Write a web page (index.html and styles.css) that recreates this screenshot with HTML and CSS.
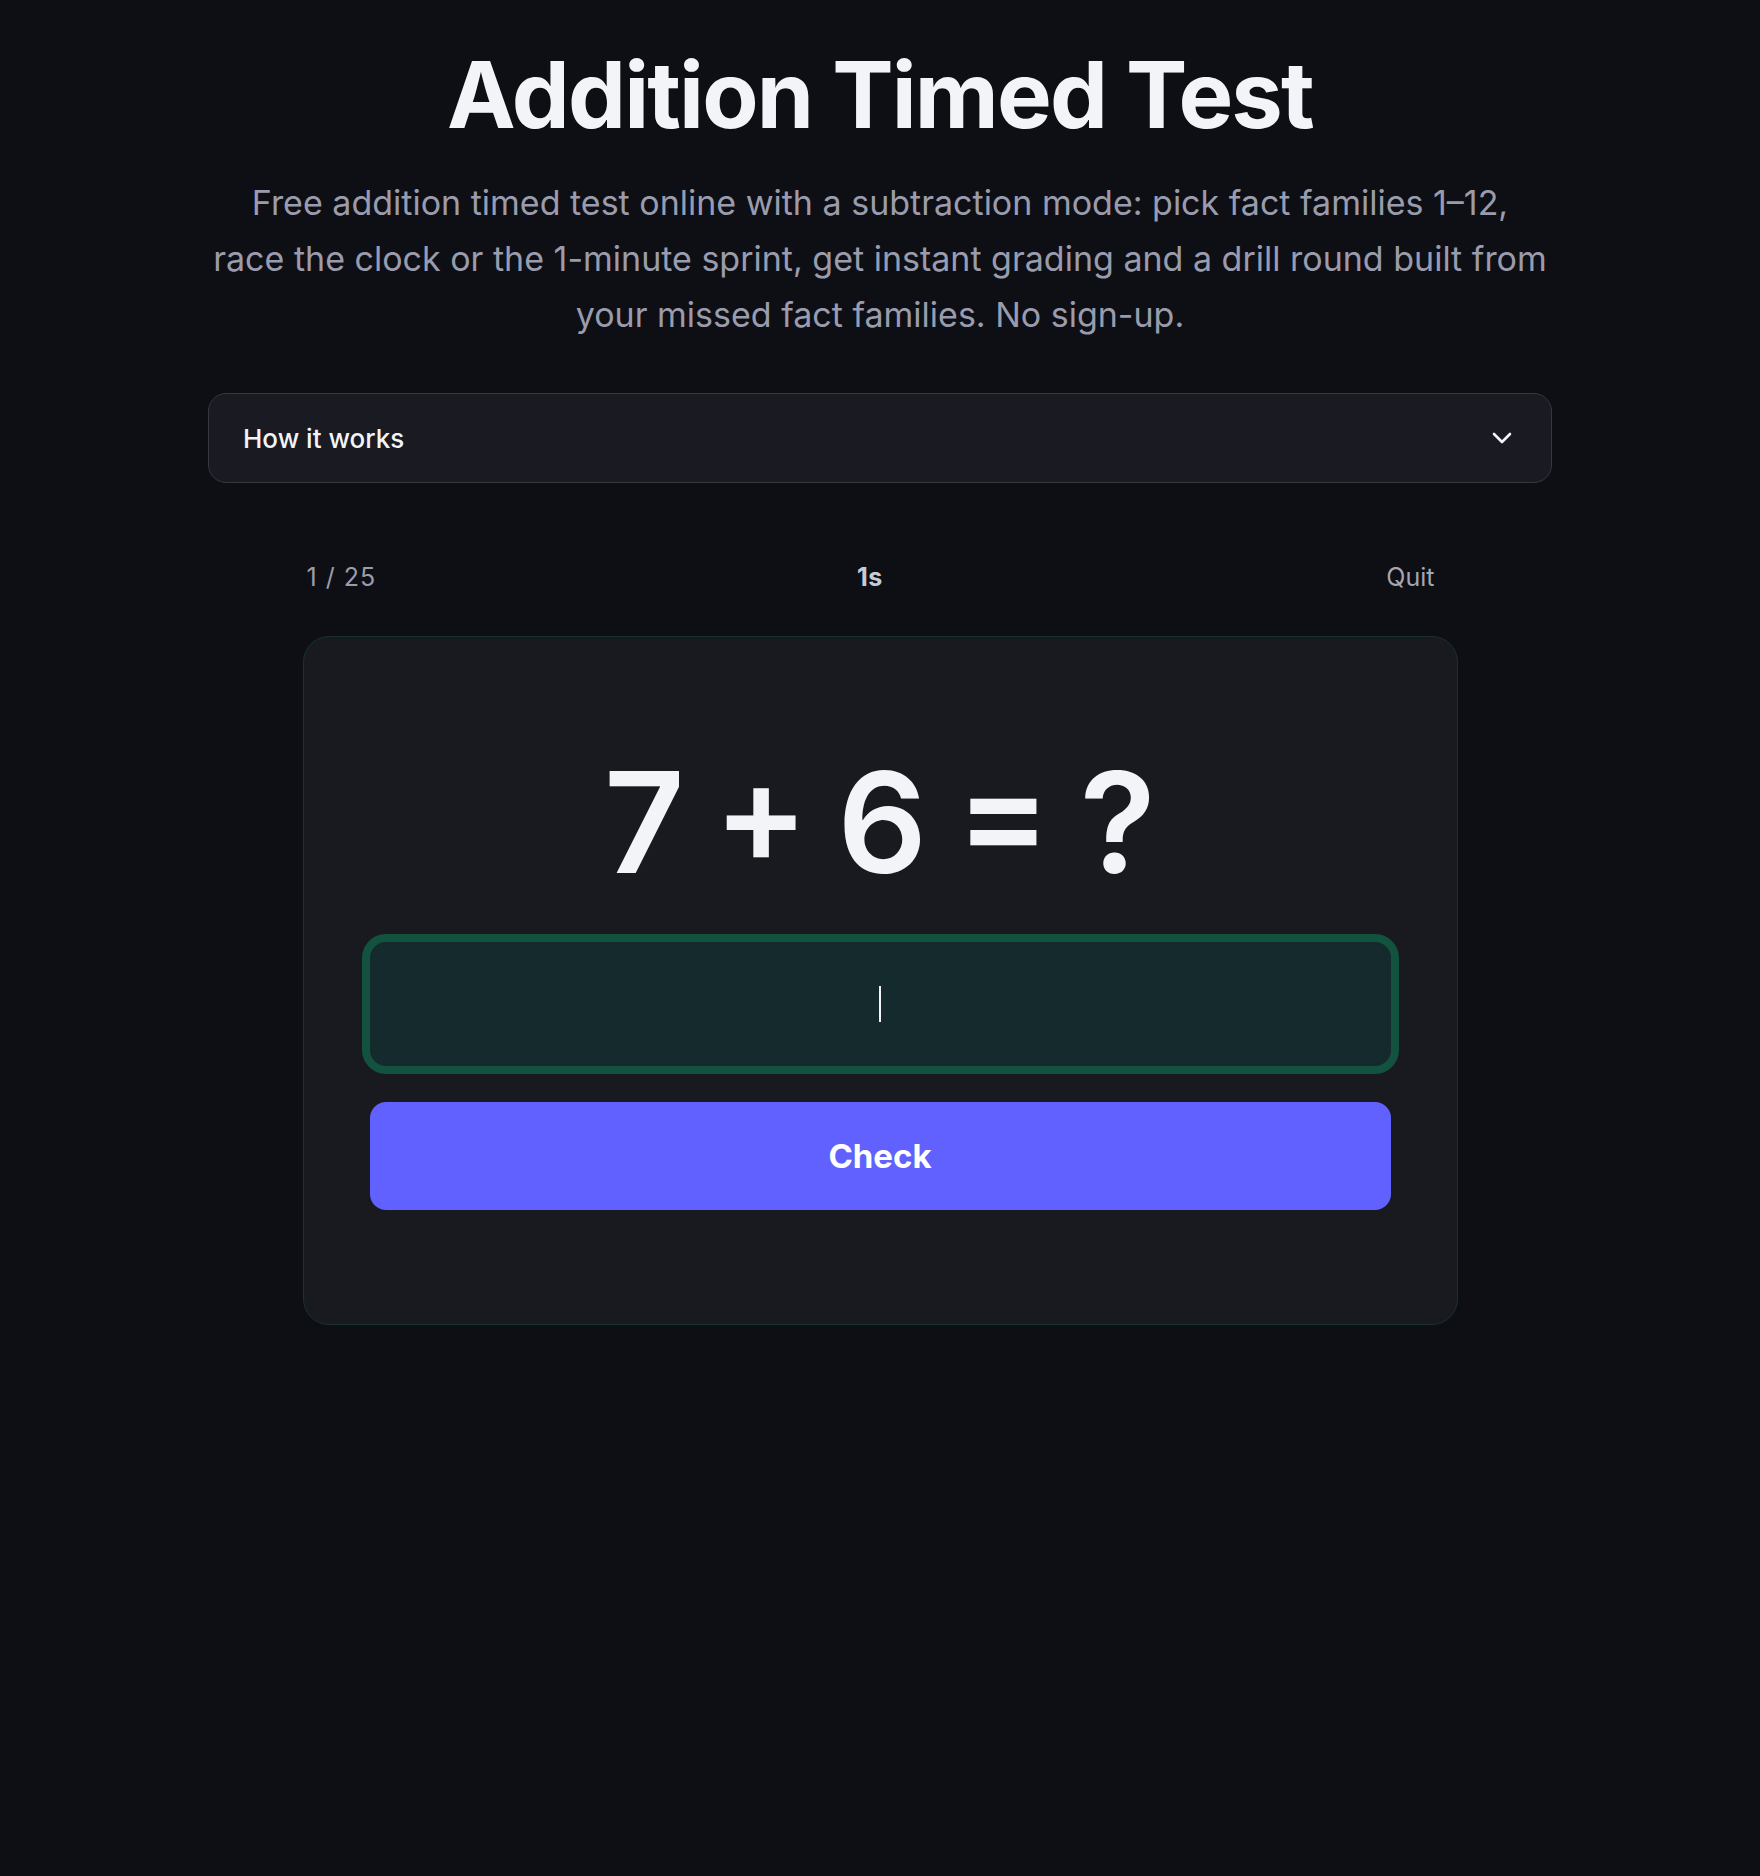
FILE: index.html
```html
<!DOCTYPE html>
<html lang="en">
<head>
<meta charset="utf-8">
<title>Addition Timed Test</title>
<link rel="stylesheet" href="styles.css">
</head>
<body>
<main class="page">
  <header class="hero">
    <h1 class="title">Addition Timed Test</h1>
    <p class="lead">Free addition timed test online with a subtraction mode: pick fact families 1–12, race the clock or the 1-minute sprint, get instant grading and a drill round built from your missed fact families. No sign-up.</p>
  </header>

  <details class="how">
    <summary class="how-summary">
      <span>How it works</span>
      <svg class="chev" width="20" height="12" viewBox="0 0 20 12" aria-hidden="true"><path d="M2 2l8 8 8-8" fill="none" stroke="#f3f4f8" stroke-width="2.6" stroke-linecap="round" stroke-linejoin="round"/></svg>
    </summary>
  </details>

  <section class="quiz">
    <div class="meta">
      <span class="count">1 / 25</span>
      <span class="timer">1s</span>
      <button class="quit" type="button">Quit</button>
    </div>
    <div class="card">
      <div class="problem">7 + 6 = ?</div>
      <div class="answer"><span class="caret"></span></div>
      <button class="check" type="button">Check</button>
    </div>
  </section>
</main>
</body>
</html>
```

FILE: styles.css
```css
* { box-sizing: border-box; }
html, body { margin: 0; padding: 0; }
body {
  background: #0e0f14;
  color: #f3f4f8;
  font-family: Inter, "Liberation Sans", sans-serif;
  min-height: 1876px;
}
.page {
  width: 1344px;
  margin: 0 auto;
  padding-top: 40px;
}
.hero { text-align: center; }
.title {
  margin: 0;
  font-size: 92px;
  line-height: 110px;
  font-weight: 700;
  letter-spacing: -0.02em;
  color: #f3f4f8;
}
.lead {
  max-width: 1336px;
  margin: 25px auto 0;
  font-size: 34px;
  line-height: 56px;
  color: #9a9cad;
}
.how {
  margin-top: 50px;
  background: #191a22;
  border: 1.5px solid #363840;
  border-radius: 18px;
}
.how-summary {
  list-style: none;
  height: 88px;
  display: flex;
  align-items: center;
  justify-content: space-between;
  padding: 0 39px 0 34px;
  font-size: 26px;
  font-weight: 500;
  color: #f3f4f8;
  cursor: pointer;
}
.how-summary::-webkit-details-marker { display: none; }
.chev { display: block; }
.quiz {
  width: 1155px;
  margin: 0 auto;
}
.meta {
  display: flex;
  align-items: center;
  justify-content: space-between;
  margin-top: 64px;
  padding: 0 0 0 4px;
  height: 60px;
  font-size: 25px;
}
.count { color: #9a9cab; letter-spacing: 1px; }
.timer { color: #c9cbd4; font-weight: 700; letter-spacing: 0.5px; }
.quit {
  background: none;
  border: 0;
  padding: 8px 23px;
  font: inherit;
  color: #a4a6b3;
  cursor: pointer;
}
.card {
  margin-top: 29px;
  background: #191920;
  border: 1.5px solid #17332f;
  border-radius: 26px;
  padding: 101px 66px 114px;
  display: flex;
  flex-direction: column;
}
.problem {
  text-align: center;
  font-size: 140px;
  line-height: 168px;
  font-weight: 600;
  word-spacing: -6px;
  color: #f3f4f8;
  margin-bottom: 36px;
}
.answer {
  height: 124px;
  background: #142a2d;
  border-radius: 16px;
  box-shadow: 0 0 0 8px #13523f;
  display: flex;
  align-items: center;
  justify-content: center;
}
.caret {
  width: 2px;
  height: 36px;
  background: #f3f4f8;
}
.check {
  margin-top: 36px;
  height: 108px;
  border: 0;
  border-radius: 16px;
  background: #6161ff;
  color: #ffffff;
  font-family: inherit;
  font-size: 33px;
  font-weight: 700;
  cursor: pointer;
}
```
